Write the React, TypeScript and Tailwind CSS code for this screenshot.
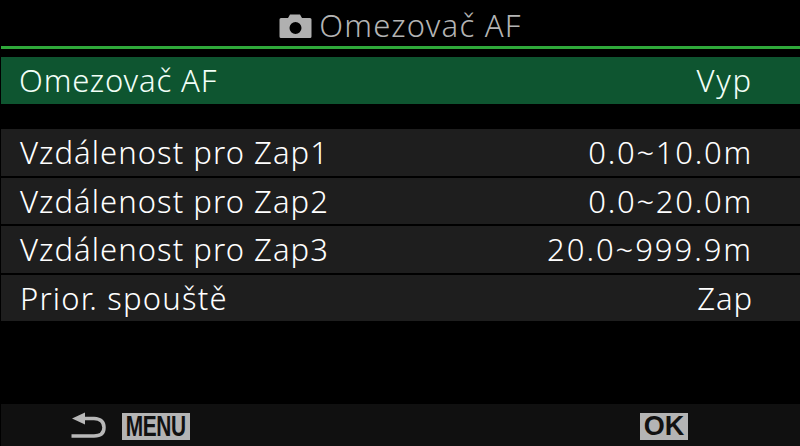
const rows = [
  ["Vzdálenost pro Zap1", "0.0~10.0m", "tracking-[1.75px]", "tracking-[1.05px]"],
  ["Vzdálenost pro Zap2", "0.0~20.0m", "tracking-[1.75px]", "tracking-[1.05px]"],
  ["Vzdálenost pro Zap3", "20.0~999.9m", "tracking-[1.95px]", "tracking-[1.05px]"],
  ["Prior. spouště", "Zap", "tracking-[0.9px]", "tracking-[1.2px]"],
];

export default function App() {
  return (
    <div className="w-[800px] h-[446px] bg-black flex flex-col overflow-hidden pl-px font-['Noto_Sans',sans-serif] font-light text-white">
      <div className="h-[46px] flex items-center justify-center gap-[7px] text-[#b4b4b4] text-[31px] tracking-[1.25px] pt-[6px]">
        <svg width="33" height="25" viewBox="0 0 33 25">
          <path fillRule="evenodd" fill="#b0b0b0" d="M2 4h7l2-3.500h10l2 3.500h8a1.500 1.500 0 0 1 1.500 1.500v17a1.500 1.500 0 0 1-1.500 1.500H2A1.500 1.500 0 0 1 .5 22.500v-17A1.500 1.500 0 0 1 2 4ZM16.500 8a6 6 0 1 0 0 12 6 6 0 0 0 0-12Z" />
        </svg>
        <span className="leading-none pb-[2px]">Omezovač AF</span>
      </div>
      <div className="h-[3px] bg-[#2fa83a]" />
      <div className="mt-[8px] h-[47px] bg-[#0e5530] flex items-center justify-between pl-[18px] pr-[47px] text-[31px] tracking-[0.85px] text-[#f2fff8]">
        <span>Omezovač AF</span>
        <span className="tracking-[1.8px]">Vyp</span>
      </div>
      <div className="mt-[25px] flex flex-col gap-[2px]">
        {rows.map(([label, value, tr, ltr]) => (
          <div key={label} className="h-[46.5px] bg-[#1e1e1e] flex items-center justify-between pl-[19px] pr-[47px] text-[31px]">
            <span className={ltr}>{label}</span>
            <span className={tr}>{value}</span>
          </div>
        ))}
      </div>
      <div className="mt-auto h-[42px] bg-[#101010] flex items-center">
        <svg width="37" height="30" viewBox="0 0 37 30" className="ml-[70px] mt-[4px]">
          <path d="M1 6.500 L14 0.500 V12.500 Z" fill="#b8b8b8" />
          <path d="M12 6.500 H23 Q33 7 33 15.500 Q33 24 23 24 H0.500" fill="none" stroke="#b8b8b8" strokeWidth="3.500" />
        </svg>
        <span className="ml-[14px] mt-[3px] w-[68px] h-[27px] bg-[#b4b4b4] text-[#111] font-['Liberation_Sans',sans-serif] font-bold text-[29px] leading-[27px] flex justify-center">
          <span className="inline-block scale-x-[0.72] tracking-[-0.5px]">MENU</span>
        </span>
        <span className="ml-[450px] mt-[3px] w-[48px] h-[27px] bg-[#b4b4b4] text-[#111] font-['Liberation_Sans',sans-serif] font-bold text-[27px] leading-[27px] text-center">OK</span>
      </div>
    </div>
  );
}
